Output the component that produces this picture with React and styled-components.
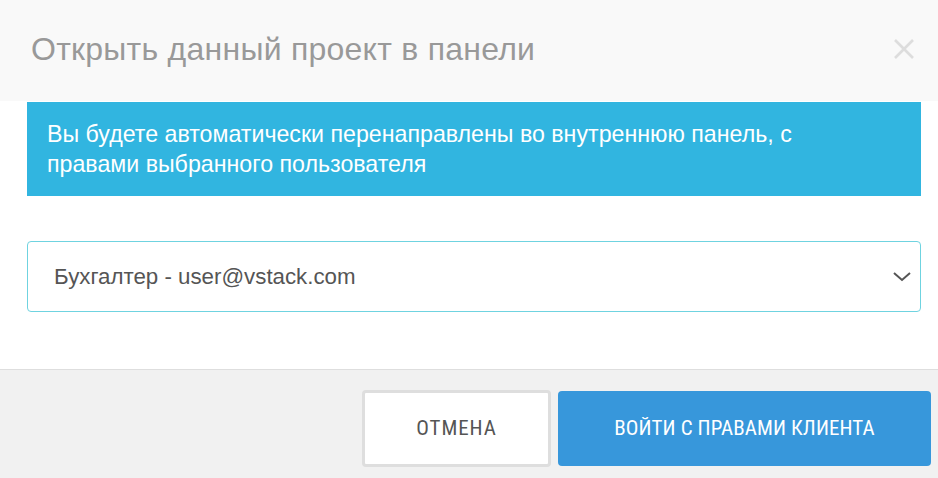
import styled, { createGlobalStyle } from "styled-components"

const Global = createGlobalStyle`
    html, body {
        margin: 0;
        padding: 0;
        background: #fff;
        font-family: "Liberation Sans", Arial, sans-serif;
    }
    * { box-sizing: border-box; }
`

const Modal = styled.div`
    width: 938px;
    height: 478px;
    display: flex;
    flex-direction: column;
    background: #fff;
    overflow: hidden;
`

const Header = styled.div`
    height: 101px;
    background: #f9f9f9;
    display: flex;
    align-items: center;
    justify-content: space-between;
    padding: 0 22px 3px 31px;

    h2 {
        margin: 0;
        font-weight: 400;
        font-size: 32px;
        letter-spacing: 0.25px;
        color: #999;
    }
`

const Close = styled.button`
    border: none;
    background: none;
    padding: 0;
    width: 24px;
    height: 24px;
    cursor: pointer;
    display: flex;
`

const Body = styled.div`
    flex: 1;
    padding: 1px 17px 0 27px;
    display: flex;
    flex-direction: column;
`

const Info = styled.div`
    background: #31b5e0;
    color: #fff;
    font-size: 23.2px;
    line-height: 30px;
    padding: 17px 20px 17px 20px;
    height: 94px;
`

const Select = styled.div`
    margin-top: 45px;
    height: 71px;
    border: 1px solid #6fd3e0;
    border-radius: 4px;
    display: flex;
    align-items: center;
    justify-content: space-between;
    padding: 0 8px 0 26px;
    font-size: 22.3px;
    color: #555;
`

const Footer = styled.div`
    height: 109px;
    border-top: 1px solid #dedede;
    background: #f1f1f1;
    display: flex;
    justify-content: flex-end;
    align-items: center;
    gap: 7px;
    padding: 8px 7px 0 0;
`

const Button = styled.button`
    height: ${p => (p.primary ? "75px" : "77px")};
    width: ${p => p.w}px;
    border-radius: 4px;
    border: ${p => (p.primary ? "none" : "3px solid #dedede")};
    background: ${p => (p.primary ? "#3797db" : "#fff")};
    color: ${p => (p.primary ? "#fff" : "#555")};
    font-family: "Roboto Condensed", Roboto, "Liberation Sans", sans-serif;
    font-size: 21px;
    letter-spacing: ${p => (p.primary ? "0.1px" : "0.9px")};
    text-transform: uppercase;
    white-space: nowrap;
    cursor: pointer;
`

export default function App() {
    return (
        <>
            <Global />
            <Modal>
                <Header>
                    <h2>Открыть данный проект в панели</h2>
                    <Close>
                        <svg width="24" height="24" viewBox="0 0 24 24">
                            <path d="M3 3L21 21M21 3L3 21" stroke="#ddd" strokeWidth="2.6" />
                        </svg>
                    </Close>
                </Header>
                <Body>
                    <Info>
                        Вы будете автоматически перенаправлены во внутреннюю панель, с<br />
                        правами выбранного пользователя
                    </Info>
                    <Select>
                        <span>Бухгалтер - user@vstack.com</span>
                        <svg width="20" height="20" viewBox="0 0 20 20">
                            <path d="M2 6L10 13L18 6" fill="none" stroke="#555" strokeWidth="2" />
                        </svg>
                    </Select>
                </Body>
                <Footer>
                    <Button w={189}>Отмена</Button>
                    <Button primary w={373}>Войти с правами клиента</Button>
                </Footer>
            </Modal>
        </>
    )
}
